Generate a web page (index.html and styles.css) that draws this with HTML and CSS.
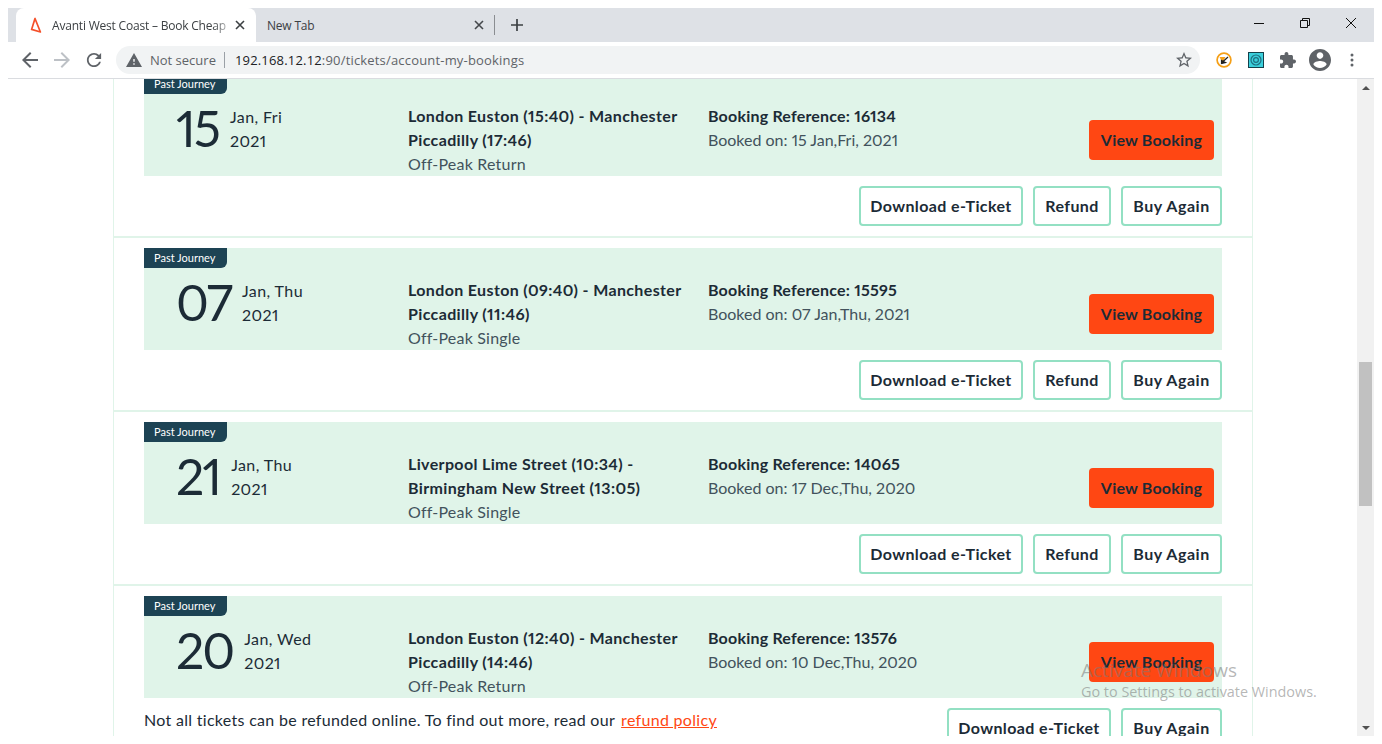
FILE: index.html
```html
<!DOCTYPE html>
<html lang="en">
<head>
    <meta charset="UTF-8">
    <title>Avanti West Coast – Book Cheap Train Tickets</title>
    <link rel="stylesheet" href="styles.css">
</head>
<body>
    <div class="window">
        <div class="tabstrip">
            <div class="tab tab-active">
                <svg class="favicon" width="16" height="16" viewBox="0 0 16 16"><path d="M7 1.5 L3.6 12.4 L12.4 15 Z" fill="none" stroke="#f4502a" stroke-width="1.7" stroke-linejoin="round"/></svg>
                <span class="tab-title tab-fade">Avanti West Coast – Book Cheap</span>
                <svg class="tab-close" width="10" height="10" viewBox="0 0 10 10"><path d="M1 1 L9 9 M9 1 L1 9" stroke="#3c4043" stroke-width="1.6"/></svg>
            </div>
            <div class="tab tab-idle">
                <span class="tab-title">New Tab</span>
                <svg class="tab-close" width="10" height="10" viewBox="0 0 10 10"><path d="M1 1 L9 9 M9 1 L1 9" stroke="#45484c" stroke-width="1.6"/></svg>
            </div>
            <div class="tab-sep"></div>
            <svg class="new-tab" width="14" height="14" viewBox="0 0 14 14"><path d="M7 1 V13 M1 7 H13" stroke="#3c4043" stroke-width="1.7"/></svg>
            <div class="win-controls">
                <svg width="12" height="12" viewBox="0 0 12 12"><path d="M1 6.5 H11" stroke="#111" stroke-width="1"/></svg>
                <svg width="12" height="12" viewBox="0 0 12 12"><path d="M1.5 3.5 H8.5 V10.5 H1.5 Z M3.5 3.5 V1.5 H10.5 V8.5 H8.5" fill="none" stroke="#111" stroke-width="1"/></svg>
                <svg width="12" height="12" viewBox="0 0 12 12"><path d="M1 1 L11 11 M11 1 L1 11" stroke="#111" stroke-width="1"/></svg>
            </div>
        </div>

        <div class="toolbar">
            <svg class="nav-icon" width="16" height="16" viewBox="4 4 16 16"><path d="M20 11H7.83l5.59-5.59L12 4l-8 8 8 8 1.41-1.41L7.83 13H20v-2z" fill="#5f6368"/></svg>
            <svg class="nav-icon" width="16" height="16" viewBox="4 4 16 16"><path d="M12 4l-1.41 1.41L16.17 11H4v2h12.17l-5.58 5.59L12 20l8-8z" fill="#bdc1c6"/></svg>
            <svg class="nav-icon" width="16" height="16" viewBox="3 3 18 18"><path d="M17.65 6.35C16.2 4.9 14.21 4 12 4c-4.42 0-7.99 3.58-7.99 8s3.57 8 7.99 8c3.73 0 6.84-2.55 7.73-6h-2.08c-.82 2.33-3.04 4-5.65 4-3.31 0-6-2.69-6-6s2.69-6 6-6c1.66 0 3.14.69 4.22 1.78L13 11h7V4l-2.35 2.35z" fill="#5f6368"/></svg>
            <div class="omnibox">
                <svg width="16" height="14" viewBox="1 2 22 19"><path d="M1 21h22L12 2 1 21zm12-3h-2v-2h2v2zm0-4h-2v-4h2v4z" fill="#5f6368"/></svg>
                <span class="not-secure">Not secure</span>
                <span class="omni-sep"></span>
                <span class="url"><span class="url-host">192.168.12.12</span>:90/tickets/account-my-bookings</span>
                <svg class="star" width="16" height="16" viewBox="2 2 20 20"><path d="M22 9.24l-7.19-.62L12 2 9.19 8.63 2 9.24l5.46 4.73L5.82 21 12 17.27 18.18 21l-1.63-7.03L22 9.24zM12 15.4l-3.76 2.27 1-4.28-3.32-2.88 4.38-.38L12 6.1l1.71 4.04 4.38.38-3.32 2.88 1 4.28L12 15.4z" fill="#5f6368"/></svg>
            </div>
            <div class="ext-icons">
                <svg width="16" height="16" viewBox="0 0 16 16"><circle cx="8" cy="8" r="6.9" fill="#fff" stroke="#f59f16" stroke-width="1.7"/><path d="M3.5 5 H9.5 L6.5 10.5 Z" fill="#f59f16"/><path d="M12 5 L5.5 11 M5.5 8.5 L9.5 10.5 L5.5 11.5 Z" stroke="#222" stroke-width="1.2"/></svg>
                <svg width="16" height="16" viewBox="0 0 16 16"><rect x="0.5" y="0.5" width="15" height="15" fill="#3bd0dc" stroke="#14414b"/><circle cx="8" cy="8" r="5" fill="none" stroke="#1f6f80" stroke-width="1.2"/><circle cx="8" cy="8" r="2.4" fill="none" stroke="#1f6f80" stroke-width="1.2"/></svg>
                <svg width="16" height="16" viewBox="2 1 21 21"><path d="M20.5 11H19V7c0-1.1-.9-2-2-2h-4V3.5C13 2.12 11.88 1 10.5 1S8 2.12 8 3.5V5H4c-1.1 0-1.99.9-1.99 2v3.8H3.5c1.49 0 2.7 1.21 2.7 2.7s-1.21 2.7-2.7 2.7H2V20c0 1.1.9 2 2 2h3.8v-1.5c0-1.49 1.21-2.7 2.7-2.7 1.49 0 2.7 1.21 2.7 2.7V22H17c1.1 0 2-.9 2-2v-4h1.5c1.38 0 2.5-1.12 2.5-2.5S21.88 11 20.5 11z" fill="#5f6368"/></svg>
                <svg class="profile" width="22" height="22" viewBox="2 2 20 20"><path d="M12 2C6.48 2 2 6.48 2 12s4.48 10 10 10 10-4.48 10-10S17.52 2 12 2zm0 3c1.66 0 3 1.34 3 3s-1.34 3-3 3-3-1.34-3-3 1.34-3 3-3zm0 14.2c-2.5 0-4.71-1.28-6-3.22.03-1.99 4-3.08 6-3.08 1.99 0 5.97 1.09 6 3.08-1.29 1.94-3.5 3.22-6 3.22z" fill="#5f6368"/></svg>
                <svg class="dots" width="4" height="14" viewBox="0 0 4 14"><circle cx="2" cy="2" r="1.5" fill="#5f6368"/><circle cx="2" cy="7" r="1.5" fill="#5f6368"/><circle cx="2" cy="12" r="1.5" fill="#5f6368"/></svg>
            </div>
        </div>

        <div class="viewport">
            <main class="page">
                <section class="booking">
                    <div class="panel">
                        <span class="badge">Past Journey</span>
                        <div class="date"><span class="day">15</span><span class="month">Jan, Fri<br>2021</span></div>
                        <div class="route"><strong>London Euston (15:40) - Manchester Piccadilly (17:46)</strong><br>Off-Peak Return</div>
                        <div class="reference"><strong>Booking Reference: 16134</strong><br>Booked on: 15 Jan,Fri, 2021</div>
                        <a class="btn-view">View Booking</a>
                    </div>
                    <div class="actions">
                        <a class="btn btn-download">Download e-Ticket</a>
                        <a class="btn btn-refund">Refund</a>
                        <a class="btn btn-buy">Buy Again</a>
                    </div>
                </section>
                <section class="booking">
                    <div class="panel">
                        <span class="badge">Past Journey</span>
                        <div class="date"><span class="day">07</span><span class="month">Jan, Thu<br>2021</span></div>
                        <div class="route"><strong>London Euston (09:40) - Manchester Piccadilly (11:46)</strong><br>Off-Peak Single</div>
                        <div class="reference"><strong>Booking Reference: 15595</strong><br>Booked on: 07 Jan,Thu, 2021</div>
                        <a class="btn-view">View Booking</a>
                    </div>
                    <div class="actions">
                        <a class="btn btn-download">Download e-Ticket</a>
                        <a class="btn btn-refund">Refund</a>
                        <a class="btn btn-buy">Buy Again</a>
                    </div>
                </section>
                <section class="booking">
                    <div class="panel">
                        <span class="badge">Past Journey</span>
                        <div class="date"><span class="day">21</span><span class="month">Jan, Thu<br>2021</span></div>
                        <div class="route"><strong>Liverpool Lime Street (10:34) - Birmingham New Street (13:05)</strong><br>Off-Peak Single</div>
                        <div class="reference"><strong>Booking Reference: 14065</strong><br>Booked on: 17 Dec,Thu, 2020</div>
                        <a class="btn-view">View Booking</a>
                    </div>
                    <div class="actions">
                        <a class="btn btn-download">Download e-Ticket</a>
                        <a class="btn btn-refund">Refund</a>
                        <a class="btn btn-buy">Buy Again</a>
                    </div>
                </section>
                <section class="booking">
                    <div class="panel">
                        <span class="badge">Past Journey</span>
                        <div class="date"><span class="day">20</span><span class="month">Jan, Wed<br>2021</span></div>
                        <div class="route"><strong>London Euston (12:40) - Manchester Piccadilly (14:46)</strong><br>Off-Peak Return</div>
                        <div class="reference"><strong>Booking Reference: 13576</strong><br>Booked on: 10 Dec,Thu, 2020</div>
                        <a class="btn-view">View Booking</a>
                    </div>
                    <div class="actions">
                        <p class="note">Not all tickets can be refunded online. To find out more, read our <a class="note-link">refund policy</a></p>
                        <a class="btn btn-download">Download e-Ticket</a>
                        <a class="btn btn-buy">Buy Again</a>
                    </div>
                </section>
            </main>
            <div class="scrollbar">
                <span class="arrow-up"></span>
                <div class="track"><div class="thumb"></div></div>
                <span class="arrow-down"></span>
            </div>
            <div class="activate">
                <div class="activate-title">Activate Windows</div>
                <div class="activate-sub">Go to Settings to activate Windows.</div>
            </div>
        </div>
    </div>
</body>
</html>
```
FILE: styles.css
```css
html, body {
    height: 100%;
}
body {
    margin: 0;
    background-color: #fff;
    padding: 8px;
    box-sizing: border-box;
    overflow: hidden;
    font-family: "Lato", sans-serif;
    color: #1c2b36;
}
.window {
    height: 728px;
    display: flex;
    flex-direction: column;
    overflow: hidden;
}

/* browser tabs */
.tabstrip {
    height: 34px;
    flex: none;
    display: flex;
    align-items: stretch;
    background-color: #dee1e6;
    padding-left: 8px;
    font-family: "Open Sans", sans-serif;
    font-size: 12px;
    color: #3c4043;
}
.tab {
    box-sizing: border-box;
    display: flex;
    align-items: center;
}
.tab-active {
    width: 240px;
    background-color: #fff;
    border-radius: 8px 8px 0 0;
    padding: 0 11px 0 12px;
}
.tab-idle {
    width: 238px;
    padding: 0 10px 0 11px;
}
.favicon {
    margin-right: 8px;
    flex: none;
}
.tab-title {
    flex: 1;
    white-space: nowrap;
    letter-spacing: -0.2px;
}
.tab-fade {
    -webkit-mask-image: linear-gradient(to right, #000 88%, transparent);
    mask-image: linear-gradient(to right, #000 88%, transparent);
}
.tab-close {
    flex: none;
}
.tab-sep {
    width: 1px;
    height: 20px;
    margin: 7px 0 0 0;
    background-color: #8a8d91;
}
.new-tab {
    margin: 10px 0 0 15px;
}
.win-controls {
    margin-left: auto;
    display: flex;
    gap: 34px;
    padding: 9px 17px 0 0;
}

/* address bar */
.toolbar {
    height: 36px;
    flex: none;
    display: flex;
    align-items: center;
    gap: 16px;
    background-color: #fff;
    border-bottom: 1px solid #dadce0;
    padding-left: 14px;
    font-family: "Open Sans", sans-serif;
    font-size: 13px;
}
.nav-icon {
    flex: none;
}
.omnibox {
    width: 1084px;
    height: 28px;
    margin-left: -2px;
    padding: 0 8px 0 10px;
    box-sizing: border-box;
    display: flex;
    align-items: center;
    background-color: #f1f3f4;
    border-radius: 14px;
    color: #5f6368;
}
.not-secure {
    margin-left: 8px;
}
.omni-sep {
    width: 1px;
    height: 16px;
    margin: 0 10px 0 8px;
    background-color: #9aa0a6;
}
.url {
    letter-spacing: 0.18px;
}
.url-host {
    color: #202124;
}
.star {
    margin-left: auto;
}
.ext-icons {
    display: flex;
    align-items: center;
    gap: 16px;
}
.profile {
    margin: 0 -3px;
}
.dots {
    margin-left: 6px;
}

/* page */
.viewport {
    flex: 1;
    min-height: 0;
    display: flex;
    position: relative;
    overflow: hidden;
}
.page {
    width: 1140px;
    height: 800px;
    margin: -15px 0 0 105px;
    box-sizing: border-box;
    border-left: 1px solid #e0f4e9;
    border-right: 1px solid #e0f4e9;
    font-size: 16px;
    line-height: 24px;
    font-variant-numeric: proportional-nums;
}
.booking {
    padding: 10px 30px;
    border-bottom: 2px solid #e0f4e9;
}
.booking:last-child {
    border-bottom: none;
}
.panel {
    height: 102px;
    padding: 30px 8px 0 32px;
    box-sizing: border-box;
    position: relative;
    display: grid;
    grid-template-columns: 232px 300px 1fr auto;
    background-color: #e0f4e9;
}
.badge {
    position: absolute;
    top: 0;
    left: 0;
    height: 20px;
    padding: 0 12px 0 10px;
    background-color: #1d4354;
    border-radius: 0 0 6px 0;
    font-size: 11px;
    line-height: 20px;
    color: #fff;
}
.date {
    display: flex;
    gap: 11px;
}
.day {
    font-size: 50px;
    font-weight: 400;
    line-height: 60px;
    margin-top: -6px;
    letter-spacing: -2px;
}
.month {
    line-height: 24px;
    margin-top: 1px;
    letter-spacing: 0.4px;
}
.route {
    width: 285px;
    color: #42525c;
    letter-spacing: 0.2px;
}
.reference {
    color: #42525c;
}
.route strong, .reference strong {
    color: #1c2b36;
    font-weight: 700;
}
.route strong {
    letter-spacing: 0.36px;
}
.reference strong {
    letter-spacing: 0.2px;
}
.btn-view {
    width: 125px;
    height: 40px;
    margin-top: 16px;
    background-color: #ff4713;
    border-radius: 4px;
    font-weight: 700;
    text-align: center;
    line-height: 40px;
    letter-spacing: 0.2px;
}
.actions {
    margin-top: 10px;
    display: flex;
    justify-content: flex-end;
    gap: 10px;
}
.btn {
    height: 40px;
    box-sizing: border-box;
    border: 2px solid #93e0c3;
    border-radius: 4px;
    background-color: #fff;
    font-weight: 700;
    line-height: 36px;
    text-align: center;
    white-space: nowrap;
    letter-spacing: 0.4px;
}
.btn-download {
    width: 164px;
}
.btn-refund {
    width: 78px;
}
.btn-buy {
    width: 101px;
    letter-spacing: 0.55px;
}
.note {
    margin: 0 auto 0 0;
    line-height: 24px;
    letter-spacing: 0.3px;
}
.note-link {
    margin-left: 2px;
    color: #ff4713;
    text-decoration: underline;
}

/* scrollbar */
.scrollbar {
    width: 17px;
    margin-left: auto;
    flex: none;
    display: flex;
    flex-direction: column;
    background-color: #f1f1f1;
}
.arrow-up, .arrow-down {
    height: 17px;
    flex: none;
    display: flex;
    align-items: center;
    justify-content: center;
}
.arrow-up::before {
    content: "";
    border: 4px solid transparent;
    border-top: none;
    border-bottom: 4px solid #505050;
}
.arrow-down::before {
    content: "";
    border: 4px solid transparent;
    border-bottom: none;
    border-top: 4px solid #505050;
}
.track {
    flex: 1;
    padding: 266px 2px 0;
}
.thumb {
    height: 144px;
    background-color: #c1c1c1;
}

/* windows watermark */
.activate {
    position: absolute;
    left: 1073px;
    top: 579px;
    font-family: "Open Sans", sans-serif;
    color: rgba(120, 120, 120, 0.55);
    white-space: nowrap;
}
.activate-title {
    font-size: 19px;
    line-height: 24px;
}
.activate-sub {
    font-size: 14.4px;
    line-height: 20px;
}
```
